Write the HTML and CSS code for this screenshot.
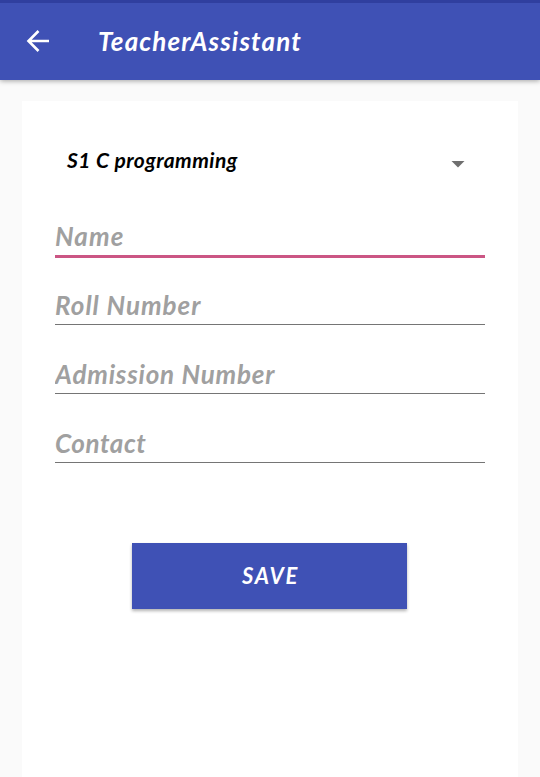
FILE: index.html
```
<!DOCTYPE html>
<html>
<head>
<meta charset="utf-8" />
<title>TeacherAssistant</title>
<link rel="stylesheet" href="styles.css">
</head>

<body>
<header class="toolbar">
<a href="#" class="back" aria-label="Back">
<svg width="24" height="24" viewBox="0 0 24 24"><path d="M12.5 2 L2.5 12 L12.5 22 M2.5 12 H23" /></svg>
</a>
<h1 class="title">TeacherAssistant</h1>
</header>

<form class="card" method="post">
<div class="spinner">
<span class="course">S1 C programming</span>
<svg class="arrow" width="14" height="7" viewBox="0 0 14 7"><path d="M0.5 0 H13.5 L7 6.5 Z" /></svg>
</div>

<input type="text" class="field name active" name="name" placeholder="Name" />
<input type="text" class="field roll" name="roll" placeholder="Roll Number" />
<input type="text" class="field admission" name="admission" placeholder="Admission Number" />
<input type="text" class="field contact" name="contact" placeholder="Contact" />

<button type="button" class="save">SAVE</button>
</form>
</body>
</html>
```
FILE: styles.css
```
* {
  box-sizing: border-box;
}

body {
  margin: 0;
  height: 777px;
  overflow: hidden;
  display: flex;
  flex-direction: column;
  background-color: #fafafa;
  font-family: Lato, "Liberation Sans", sans-serif;
  font-style: italic;
}

.toolbar {
  flex: none;
  display: flex;
  align-items: center;
  height: 80px;
  padding-left: 26px;
  border-top: 3px solid #303f9f;
  background-color: #3f51b5;
  box-shadow: 0 1px 5px rgba(0, 0, 0, .35);
}

.back {
  display: flex;
  width: 72px;
  padding-bottom: 1px;
}

.back path {
  fill: none;
  stroke: #fff;
  stroke-width: 2.6;
}

.title {
  margin: 0;
  padding-bottom: 2px;
  color: #fff;
  font-size: 26px;
  font-weight: bold;
  line-height: 32px;
  letter-spacing: 1.15px;
}

.card {
  flex: 1;
  display: flex;
  flex-direction: column;
  margin: 21px 22px 0;
  padding: 32px 33px 0;
  background-color: #fff;
}

.spinner {
  display: flex;
  align-items: flex-start;
  justify-content: space-between;
  height: 56px;
  padding: 0 20.5px 0 12px;
}

.course {
  margin-top: 14px;
  color: #000;
  font-size: 21px;
  font-weight: bold;
  line-height: 26px;
  letter-spacing: .45px;
}

.arrow {
  margin-top: 28px;
  fill: #6f6f6f;
}

.field {
  flex: none;
  width: 100%;
  height: 69px;
  padding: 30px 0 0;
  border: 0;
  border-bottom: 1px solid #757575;
  border-radius: 0;
  outline: 0;
  background: none;
  font: italic bold 26px Lato, "Liberation Sans", sans-serif;
}

.field::placeholder {
  color: #a0a0a0;
  opacity: 1;
}

.name {
  padding-top: 28px;
  letter-spacing: 1.1px;
}

.roll {
  height: 67px;
  padding-top: 28px;
  letter-spacing: 1px;
}

.admission {
  letter-spacing: .8px;
}

.contact {
  letter-spacing: .6px;
}

.active {
  border-bottom: 3px solid #cb5684;
}

.save {
  flex: none;
  width: 275px;
  height: 66px;
  margin: 80px 0 0 77px;
  padding: 0 0 1px 2px;
  border: 0;
  background-color: #3f51b5;
  box-shadow: 0 2px 3px rgba(0, 0, 0, .3);
  color: #fff;
  font: italic bold 22px Lato, "Liberation Sans", sans-serif;
  letter-spacing: 1.7px;
}
```
